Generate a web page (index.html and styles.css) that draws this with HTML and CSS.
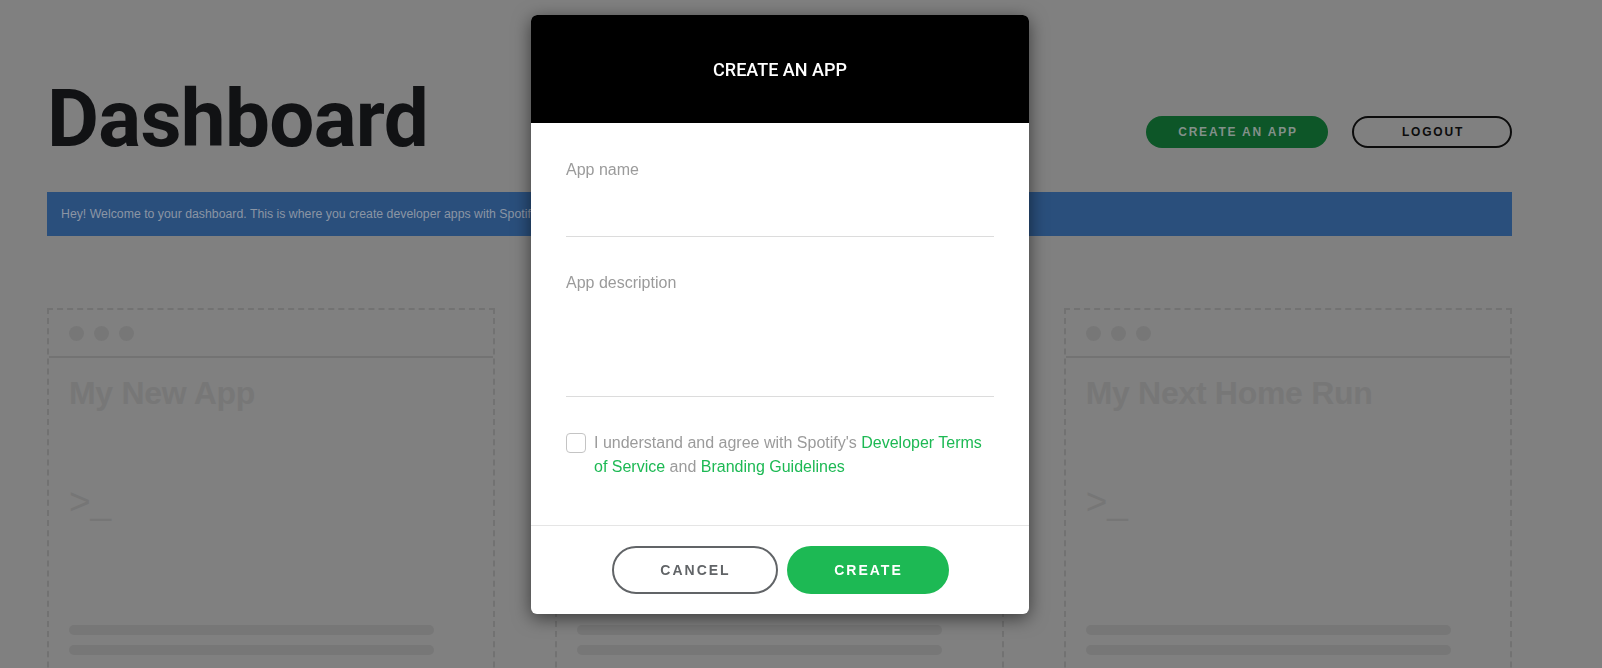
FILE: index.html
```html
<!DOCTYPE html>
<html lang="en">
<head>
<meta charset="utf-8">
<title>Dashboard</title>
<link rel="stylesheet" href="styles.css">
</head>
<body>
<div class="page">
  <header class="topbar">
    <h1 class="title">Dashboard</h1>
    <div class="actions">
      <button class="pill pill-green">CREATE AN APP</button>
      <button class="pill pill-outline">LOGOUT</button>
    </div>
  </header>
  <div class="banner">Hey! Welcome to your dashboard. This is where you create developer apps with Spotify.</div>
  <div class="cards">
    <div class="card">
      <div class="card-head"><span class="dot"></span><span class="dot"></span><span class="dot"></span></div>
      <div class="card-body">
        <div class="card-title">My New App</div>
        <div class="prompt">&gt;_</div>
        <div class="bar"></div>
        <div class="bar"></div>
      </div>
    </div>
    <div class="card">
      <div class="card-head"><span class="dot"></span><span class="dot"></span><span class="dot"></span></div>
      <div class="card-body">
        <div class="card-title">My Awesome App</div>
        <div class="prompt">&gt;_</div>
        <div class="bar"></div>
        <div class="bar"></div>
      </div>
    </div>
    <div class="card">
      <div class="card-head"><span class="dot"></span><span class="dot"></span><span class="dot"></span></div>
      <div class="card-body">
        <div class="card-title">My Next Home Run</div>
        <div class="prompt">&gt;_</div>
        <div class="bar"></div>
        <div class="bar"></div>
      </div>
    </div>
  </div>
</div>

<div class="overlay">
  <div class="modal">
    <div class="modal-head">CREATE AN APP</div>
    <div class="modal-body">
      <label class="field">
        <span class="label">App name</span>
        <input class="input" type="text">
      </label>
      <label class="field field-gap">
        <span class="label">App description</span>
        <textarea class="input textarea"></textarea>
      </label>
      <div class="agree">
        <span class="checkbox"></span>
        <p class="agree-text">I understand and agree with Spotify's <a href="#">Developer Terms</a> <a href="#">of Service</a> and <a href="#">Branding Guidelines</a></p>
      </div>
    </div>
    <div class="modal-foot">
      <button class="mbtn mbtn-cancel">CANCEL</button>
      <button class="mbtn mbtn-create">CREATE</button>
    </div>
  </div>
</div>
</body>
</html>
```
FILE: styles.css
```css
/* Page colours are the dimmed tones seen behind the open modal */
* { box-sizing: border-box; }
html, body { margin: 0; height: 100%; }
body {
  background: #808080;
  font-family: "Liberation Sans", Arial, sans-serif;
  color: #111214;
  overflow: hidden;
}

.page { padding: 78px 90px 0 47px; }

.topbar {
  display: flex;
  justify-content: space-between;
  align-items: flex-start;
}
.title {
  margin: 0;
  font-family: Roboto, "Liberation Sans", sans-serif;
  font-size: 80px;
  line-height: 82px;
  font-weight: 700;
  letter-spacing: -0.7px;
  color: #111214;
}
.actions {
  display: flex;
  gap: 24px;
  margin-top: 38px;
}
.pill {
  height: 32px;
  border-radius: 16px;
  font-family: "Liberation Sans", Arial, sans-serif;
  font-weight: 700;
  font-size: 12px;
  letter-spacing: 1.8px;
  padding: 0 0 0 2px;
  cursor: pointer;
}
.pill-green {
  width: 182px;
  background: #0d5628;
  color: #83908a;
  border: none;
}
.pill-outline {
  width: 160px;
  background: transparent;
  color: #0c0c0c;
  border: 2px solid #0c0c0c;
}

.banner {
  margin-top: 32px;
  height: 44px;
  background: #2a4f7c;
  color: #8a95a4;
  font-size: 12.3px;
  display: flex;
  align-items: center;
  padding: 0 14px;
}

.cards {
  margin-top: 72px;
  display: grid;
  grid-template-columns: repeat(3, 1fr);
  gap: 60px;
}
.card {
  border: 2px dashed #727272;
  height: 420px;
}
.card-head {
  height: 48px;
  border-bottom: 2px solid #737373;
  display: flex;
  align-items: center;
  gap: 10px;
  padding: 0 20px;
}
.dot {
  width: 15px;
  height: 15px;
  border-radius: 50%;
  background: #777777;
}
.card-body { padding: 15px 20px 0; }
.card-title {
  font-size: 32px;
  line-height: 40px;
  font-weight: 700;
  color: #777777;
  letter-spacing: -0.3px;
}
.prompt {
  margin-top: 69px;
  font-size: 37px;
  line-height: 40px;
  color: #767676;
}
.bar {
  width: 365px;
  height: 10px;
  border-radius: 5px;
  background: #777777;
  margin-top: 10px;
}
.prompt + .bar { margin-top: 103px; }

.overlay {
  position: fixed;
  top: 0;
  left: 0;
  right: 0;
  bottom: 0;
}
.modal {
  position: absolute;
  top: 15px;
  left: 531px;
  width: 498px;
  background: #ffffff;
  border-radius: 6px;
  overflow: hidden;
  box-shadow: 0 4px 18px rgba(0, 0, 0, 0.55);
}
.modal-head {
  height: 108px;
  background: #000000;
  color: #ffffff;
  display: flex;
  align-items: center;
  justify-content: center;
  font-family: Roboto, "Liberation Sans", sans-serif;
  font-size: 18px;
  font-weight: 500;
}
.modal-body { padding: 37px 35px 46px; }
.field { display: block; }
.field-gap { margin-top: 36px; }
.label {
  display: block;
  font-size: 16px;
  line-height: 20px;
  color: #9b9b9b;
}
.input {
  display: block;
  width: 100%;
  height: 57px;
  border: none;
  border-bottom: 1px solid #dcdcdc;
  outline: none;
  font: 16px "Liberation Sans", Arial, sans-serif;
  background: transparent;
  resize: none;
  padding: 0;
}
.textarea { height: 104px; }

.agree {
  margin-top: 34px;
  display: flex;
  align-items: flex-start;
  gap: 8px;
}
.checkbox {
  flex: none;
  width: 20px;
  height: 20px;
  margin-top: 2px;
  border: 1px solid #c4c4c4;
  border-radius: 4px;
}
.agree-text {
  margin: 0;
  font-size: 16px;
  line-height: 24px;
  color: #9b9b9b;
}
.agree-text a {
  color: #1db954;
  text-decoration: none;
}

.modal-foot {
  border-top: 1px solid #e5e5e5;
  padding: 20px 0;
  display: flex;
  justify-content: center;
  gap: 9px;
}
.mbtn {
  height: 48px;
  border-radius: 24px;
  font-family: "Liberation Sans", Arial, sans-serif;
  font-size: 14px;
  font-weight: 700;
  letter-spacing: 2px;
  padding: 0 0 0 2px;
  cursor: pointer;
}
.mbtn-cancel {
  width: 166px;
  background: #ffffff;
  border: 2px solid #616467;
  color: #616467;
}
.mbtn-create {
  width: 162px;
  background: #1db954;
  border: none;
  color: #ffffff;
}
```
